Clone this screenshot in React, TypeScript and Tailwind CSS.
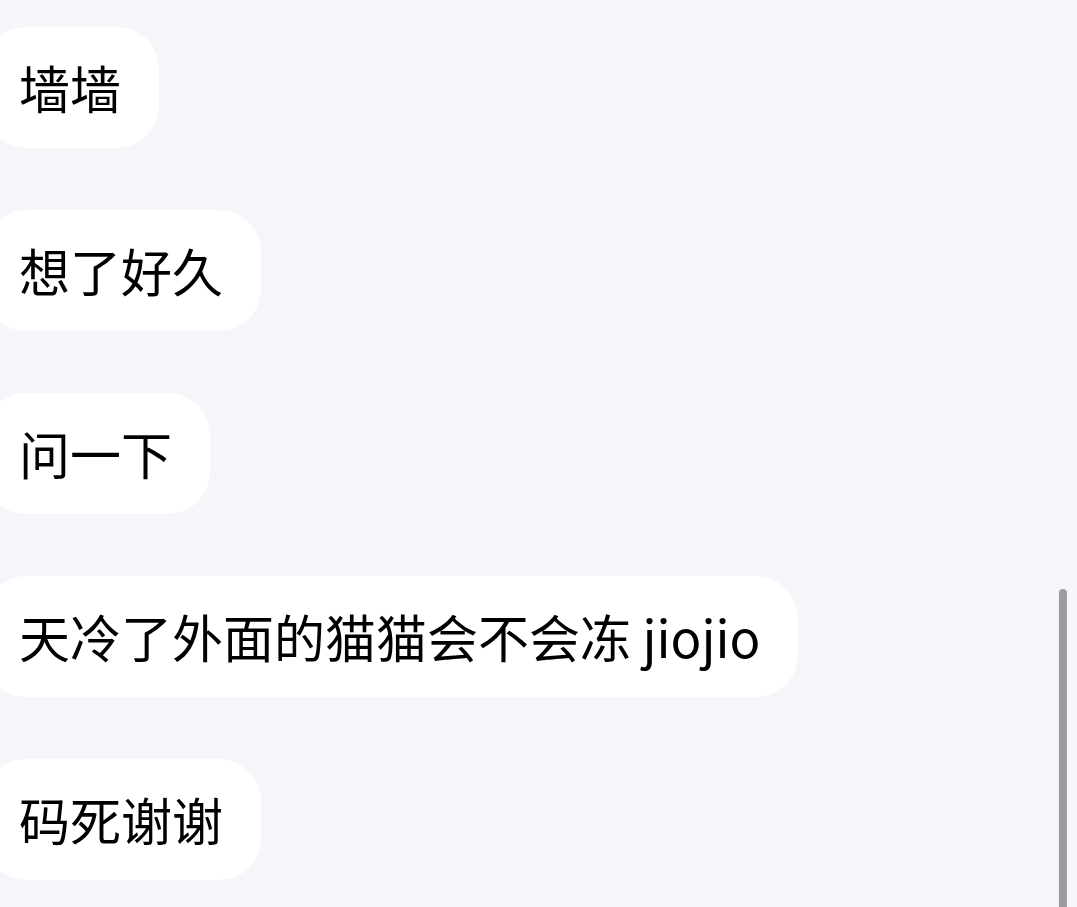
import React from 'react';

const messages = ['墙墙', '想了好久', '问一下', '天冷了外面的猫猫会不会冻 jiojio', '码死谢谢'];

export default function App() {
  return (
    <div
      className="relative w-[1077px] h-[907px] overflow-hidden bg-[#f5f6fa]"
      style={{ fontFamily: '"Noto Sans CJK SC", "Noto Sans", sans-serif' }}
    >
      <div className="flex flex-col items-start gap-[62px] pt-[27px]">
        {messages.map((m) => (
          <div
            key={m}
            className="-ml-[16px] h-[121px] flex items-center pl-[35px] pr-[38px] rounded-[42px] bg-white text-[51px] font-normal leading-none text-black whitespace-nowrap"
          >
            {m}
          </div>
        ))}
      </div>
      {/* overlay scrollbar */}
      <div className="absolute left-[1059px] top-[589px] w-[8px] h-[340px] rounded-full bg-[#9c9ca0]" />
    </div>
  );
}
